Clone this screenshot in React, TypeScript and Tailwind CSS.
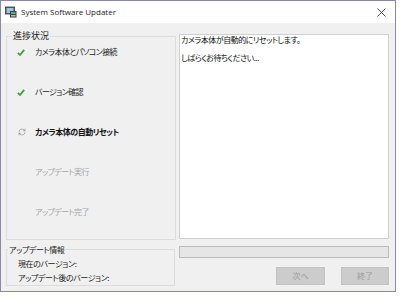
import { RefreshCw } from "lucide-react";

const jp = "font-['Meiryo_UI','Noto_Sans_CJK_JP',sans-serif] [font-feature-settings:'palt']";

function Check() {
  return (
    <svg width="8" height="7" viewBox="0 0 8 7" className="shrink-0">
      <path d="M0.8 3.8 L3 6 L7.2 0.9" fill="none" stroke="#3aa63f" strokeWidth="1.8" />
    </svg>
  );
}

function AppIcon() {
  return (
    <svg width="12" height="12" viewBox="0 0 12 12" className="shrink-0">
      <rect x="0.5" y="1" width="9" height="7" fill="#4a6b8a" stroke="#2b3a48" strokeWidth="0.8" />
      <rect x="1.6" y="2" width="6.8" height="5" fill="#9fc4e0" />
      <rect x="5" y="5" width="6.5" height="6.5" fill="#3f3f3f" />
      <rect x="6" y="6" width="4.5" height="2" fill="#5cb85c" />
      <rect x="6" y="9" width="4.5" height="1.5" fill="#bdbdbd" />
    </svg>
  );
}

const steps = [
  { label: "カメラ本体とパソコン接続", state: "done" },
  { label: "バージョン確認", state: "done" },
  { label: "カメラ本体の自動リセット", state: "active" },
  { label: "アップデート実行", state: "todo" },
  { label: "アップデート完了", state: "todo" },
];

export default function App() {
  return (
    <div className="h-[298px] w-[404px] bg-white">
      <div className="flex h-[292px] w-[396px] flex-col border border-[#8a8aa4] bg-[#f0f0f0]">
        {/* title bar */}
        <div className="flex h-[22px] shrink-0 items-center bg-white pl-[4px] pr-[9px]">
          <AppIcon />
          <span className="ml-[4px] font-['Segoe_UI','Open_Sans',sans-serif] text-[8px] text-[#1a1a1a]">
            System Software Updater
          </span>
          <span className="ml-auto text-[#333]">
            <svg width="9" height="9" viewBox="0 0 9 9">
              <path d="M0.5 0.5 L8.5 8.5 M8.5 0.5 L0.5 8.5" stroke="#333" strokeWidth="0.9" />
            </svg>
          </span>
        </div>

        <div className={`flex flex-1 flex-col pl-[5px] pr-[6px] pt-[8px] ${jp}`}>
          <div className="flex items-start gap-[3px]">
            <fieldset className="h-[209px] w-[170px] border border-[#dcdcdc] px-0">
              <legend className="ml-[5px] px-[1px] text-[9px] leading-[10px] text-[#222]">進捗状況</legend>
              <div className="flex flex-col gap-[20px] pl-[10px] pt-[1px]">
                {steps.map((s) => (
                  <div key={s.label} className="flex h-[20px] items-center">
                    <span className="flex w-[18px] items-center">
                      {s.state === "done" ? <Check /> : null}
                      {s.state === "active" ? (
                        <RefreshCw size={8} strokeWidth={1.5} color="#777" className="ml-[1px]" />
                      ) : null}
                    </span>
                    <span
                      className={
                        s.state === "active"
                          ? "text-[8px] font-bold tracking-[-0.5px] text-[#111]"
                          : s.state === "done"
                            ? "text-[8px] tracking-[-0.6px] text-[#222]"
                            : "text-[8px] tracking-[-0.6px] text-[#a6a6a6]"
                      }
                    >
                      {s.label}
                    </span>
                  </div>
                ))}
              </div>
            </fieldset>
            <div className="mt-[3px] h-[205px] flex-1 border border-[#d0d0d0] bg-white px-[1px] text-[8px] leading-[9px] tracking-[-0.5px] text-[#111]">
              <p>カメラ本体が自動的にリセットします。</p>
              <p>&nbsp;</p>
              <p>しばらくお待ちください...</p>
            </div>
          </div>

          <div className="mt-[5px] flex items-start gap-[3px]">
            <fieldset className="h-[41px] w-[169px] border border-[#dcdcdc] px-0">
              <legend className="ml-[1px] px-[1px] text-[8px] leading-[9px] tracking-[-0.4px] text-[#222]">アップデート情報</legend>
              <div className="flex flex-col gap-[3px] pl-[11px] pt-[4px] text-[8px] leading-[11px] tracking-[-0.4px] text-[#222]">
                <span>現在のバージョン:</span>
                <span>アップデート後のバージョン:</span>
              </div>
            </fieldset>
            <div className="flex flex-1 flex-col pl-[1px]">
              <div className="mt-[1px] h-[12px] border border-[#bcbcbc] bg-[#e6e6e6]" />
              <div className="mt-[9px] flex justify-end gap-[16px]">
                <button className="flex h-[18px] w-[49px] items-center justify-center border border-[#c2c2c2] bg-[#cccccc] text-[8px] text-[#9a9a9a]">
                  次へ
                </button>
                <button className="flex h-[18px] w-[48px] items-center justify-center border border-[#c2c2c2] bg-[#cccccc] text-[8px] text-[#9a9a9a]">
                  終了
                </button>
              </div>
            </div>
          </div>
        </div>
      </div>
    </div>
  );
}
